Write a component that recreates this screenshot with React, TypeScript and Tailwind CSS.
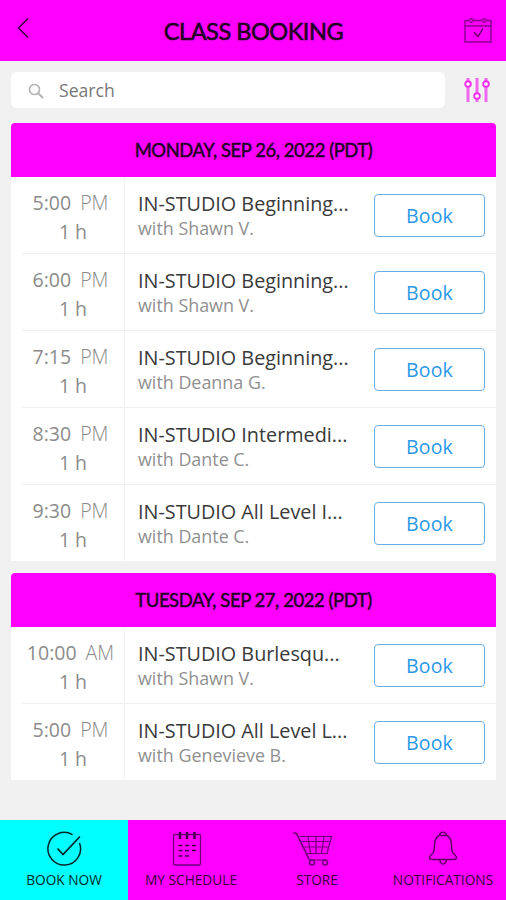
import { clsx } from 'clsx';
import type { ReactNode } from 'react';

type ClassItem = {
  time: string;
  period: string;
  title: string;
  teacher: string;
};

const days: { label: string; items: ClassItem[] }[] = [
  {
    label: 'MONDAY, SEP 26, 2022 (PDT)',
    items: [
      { time: '5:00', period: 'PM', title: 'IN-STUDIO Beginning...', teacher: 'Shawn V.' },
      { time: '6:00', period: 'PM', title: 'IN-STUDIO Beginning...', teacher: 'Shawn V.' },
      { time: '7:15', period: 'PM', title: 'IN-STUDIO Beginning...', teacher: 'Deanna G.' },
      { time: '8:30', period: 'PM', title: 'IN-STUDIO Intermedi...', teacher: 'Dante C.' },
      { time: '9:30', period: 'PM', title: 'IN-STUDIO All Level I...', teacher: 'Dante C.' },
    ],
  },
  {
    label: 'TUESDAY, SEP 27, 2022 (PDT)',
    items: [
      { time: '10:00', period: 'AM', title: 'IN-STUDIO Burlesqu...', teacher: 'Shawn V.' },
      { time: '5:00', period: 'PM', title: 'IN-STUDIO All Level L...', teacher: 'Genevieve B.' },
    ],
  },
];

function CalendarIcon() {
  return (
    <svg width="28" height="28" viewBox="0 0 28 28" fill="none" stroke="#8a0090" strokeWidth="1.4">
      <path d="M5.5 3.5H1v21.500h26v-21.500h-4.500M9.500 3.500h9M1 9h26" />
      <circle cx="7.500" cy="3.500" r="1.700" />
      <circle cx="20.500" cy="3.500" r="1.700" />
      <path d="M10 15.500l4 4 5-8" stroke="#5c0060" />
    </svg>
  );
}

function FilterIcon() {
  return (
    <svg width="26" height="26" viewBox="0 0 26 26" fill="none" stroke="#f02cf0" strokeWidth="1.900">
      <path d="M4 1v3M4 10v15M13 1v15M13 22v3M22 1v3M22 10v15" strokeWidth="3" strokeOpacity="0.7" />
      <circle cx="4" cy="7" r="2.800" fill="#fff" />
      <circle cx="13" cy="19" r="2.800" fill="#fff" />
      <circle cx="22" cy="7" r="2.800" fill="#fff" />
    </svg>
  );
}

function BookIcon() {
  return (
    <svg width="36" height="36" viewBox="0 0 36 36" fill="none" stroke="#00282b" strokeWidth="1.500">
      <path d="M26.500 3.700A16.300 16.300 0 1 0 33.500 12" />
      <path d="M11.500 17.500l5.500 6L34 5.500" strokeWidth="1.800" />
    </svg>
  );
}

function ScheduleIcon() {
  return (
    <svg width="30" height="36" viewBox="0 0 30 36" fill="none" stroke="#43004a" className="-translate-x-1">
      <rect x="1.500" y="3.500" width="27" height="30.500" rx="1" strokeWidth="1.300" stroke="#700078" />
      <path d="M8 1v7M15 1v7M22.500 1v7" strokeWidth="2.400" />
      <path d="M6.500 14.500h4M13 14.500h4M20 14.500h4M6.500 19.500h4M13 19.500h4M20 19.500h4M6.500 25h4M13 25h4" strokeWidth="1.500" />
    </svg>
  );
}

function StoreIcon() {
  return (
    <svg width="42" height="36" viewBox="0 0 42 36" fill="none" stroke="#700078" strokeWidth="1.200" className="-translate-x-[4px]">
      <path d="M1 2.500c3-1.500 4 .5 5 3L17.500 29" strokeWidth="1.700" />
      <path d="M7.500 5.500h32L35 22.500H14.500M9.500 10.500h28.500M12 16h24.500" />
      <path d="M16 5.500l2.500 17M24 5.500v17M32 5.500l-2.500 17M17 29h16" />
      <circle cx="20" cy="31.500" r="2.500" strokeWidth="1.500" />
      <circle cx="33" cy="31.500" r="2.500" strokeWidth="1.500" />
    </svg>
  );
}

function BellIcon() {
  return (
    <svg width="30" height="36" viewBox="0 0 30 36" fill="none" stroke="#5c0064" strokeWidth="1.400">
      <path d="M12 4c-4 1.500-5.500 5-5.500 10.500 0 6-1 7.500-3.500 9.500-2.500 2.500-2 4 1 4.500h22c3-.5 3.500-2 1-4.500-2.500-2-3.500-3.500-3.500-9.500C23.500 9 22 5.500 18 4" />
      <path d="M11.500 4.500c.5-4.500 6.500-4.500 7 0zM12 28.500c-1 6 7 6 6 0" />
    </svg>
  );
}

function ClassRow({ item, last }: { item: ClassItem; last: boolean }) {
  return (
    <div className="flex h-[77px]">
      <div className={clsx('ml-[11px] w-[103px] border-b border-r border-r-[#f4f4f4]', last ? 'border-b-transparent' : 'border-b-[#eeeeee]')}>
        <div className="mt-[12px] mr-[5px] flex justify-center gap-[9px] whitespace-nowrap text-[19.5px] leading-[28px] text-[#8b8b8b]">
          <span>{item.time}</span>
          <span className="font-light text-[#8b8b8b]">{item.period}</span>
        </div>
        <div className="mt-[1px] text-center text-[19.5px] leading-[28px] text-[#8b8b8b]">1 h</div>
      </div>
      <div className={clsx('flex flex-1 justify-between border-b pl-[13px] pr-[11px]', last ? 'border-b-transparent' : 'border-b-[#eeeeee]')}>
        <div className="mt-[13px] whitespace-nowrap">
          <div className="text-[19.8px] leading-[28px] text-[#3a3a3a]">{item.title}</div>
          <div className="-mt-px text-[17.9px] leading-[22px] text-[#909090]">with {item.teacher}</div>
        </div>
        <button className="mt-[16.5px] h-[43px] w-[111px] shrink-0 rounded-[4px] border-[1.5px] border-[#68afe9] pt-px text-[19.5px] leading-[28px] tracking-[0.200px] text-[#2a98e8]">
          Book
        </button>
      </div>
    </div>
  );
}

function NavItem({ icon, label, active }: { icon: ReactNode; label: string; active?: boolean }) {
  return (
    <button className={clsx('flex flex-col items-center pt-[11px]', active ? 'bg-[#00ffff]' : 'bg-[#ff00ff]')}>
      <span className="h-[36px]">{icon}</span>
      <span className={clsx('mt-[3px] whitespace-nowrap text-[13.7px] leading-[20px] font-medium', active ? 'text-[#00282b]' : 'text-[#3a0040]')}>{label}</span>
    </button>
  );
}

export default function App() {
  return (
    <div className="flex h-[900px] w-[506px] flex-col overflow-hidden bg-[#f1f1f1] font-['Open_Sans',sans-serif]">
      {/* Header */}
      <header className="flex h-[61px] shrink-0 items-center justify-between bg-[#ff00ff] pl-[17px] pr-[14px]">
        <svg width="28" height="22" viewBox="0 0 28 22" fill="none" stroke="#3d0040" strokeWidth="1.500" className="mb-[5px]">
          <path d="M11 1.500L1.500 11l9.500 9.500" />
        </svg>
        <h1 className="mr-[2px] font-['Lato',sans-serif] text-[23.5px] leading-[30px] font-normal tracking-[-0.45px] text-[#230025] [-webkit-text-stroke:0.6px_#230025]">
          CLASS BOOKING
        </h1>
        <CalendarIcon />
      </header>

      {/* Search */}
      <div className="mt-[11px] flex h-[36px] shrink-0 items-center pl-[11px]">
        <div className="flex h-[36px] w-[434px] items-center rounded-[6px] bg-white pl-[17px]">
          <svg width="16" height="16" viewBox="0 0 16 16" fill="none" stroke="#b5b5b5" strokeWidth="1.700" className="mt-px">
            <circle cx="6.500" cy="6.500" r="5" />
            <path d="M10 10l5 5" strokeWidth="2" />
          </svg>
          <span className="ml-[15px] text-[17.6px] leading-[26px] text-[#777777]">Search</span>
        </div>
        <div className="ml-[19px]">
          <FilterIcon />
        </div>
      </div>

      {/* Class list */}
      <main className="mt-[15px] flex flex-1 flex-col gap-[12px] pl-[11px] pr-[10px]">
        {days.map((day) => (
          <section key={day.label} className="overflow-hidden rounded-t-[4px] bg-white">
            <h2 className="flex h-[54px] items-center justify-center bg-[#ff00ff] pt-px font-['Lato',sans-serif] text-[18.4px] font-normal tracking-[-0.4px] text-[#230025] [-webkit-text-stroke:0.5px_#230025]">
              {day.label}
            </h2>
            <div className="-mb-px">
              {day.items.map((item, i) => (
                <ClassRow key={i} item={item} last={i === day.items.length - 1} />
              ))}
            </div>
          </section>
        ))}
      </main>

      {/* Bottom nav */}
      <nav className="grid h-[80px] shrink-0 grid-cols-[128px_126px_126px_126px] bg-[#ff00ff]">
        <NavItem icon={<BookIcon />} label="BOOK NOW" active />
        <NavItem icon={<ScheduleIcon />} label="MY SCHEDULE" />
        <NavItem icon={<StoreIcon />} label="STORE" />
        <NavItem icon={<BellIcon />} label="NOTIFICATIONS" />
      </nav>
    </div>
  );
}
